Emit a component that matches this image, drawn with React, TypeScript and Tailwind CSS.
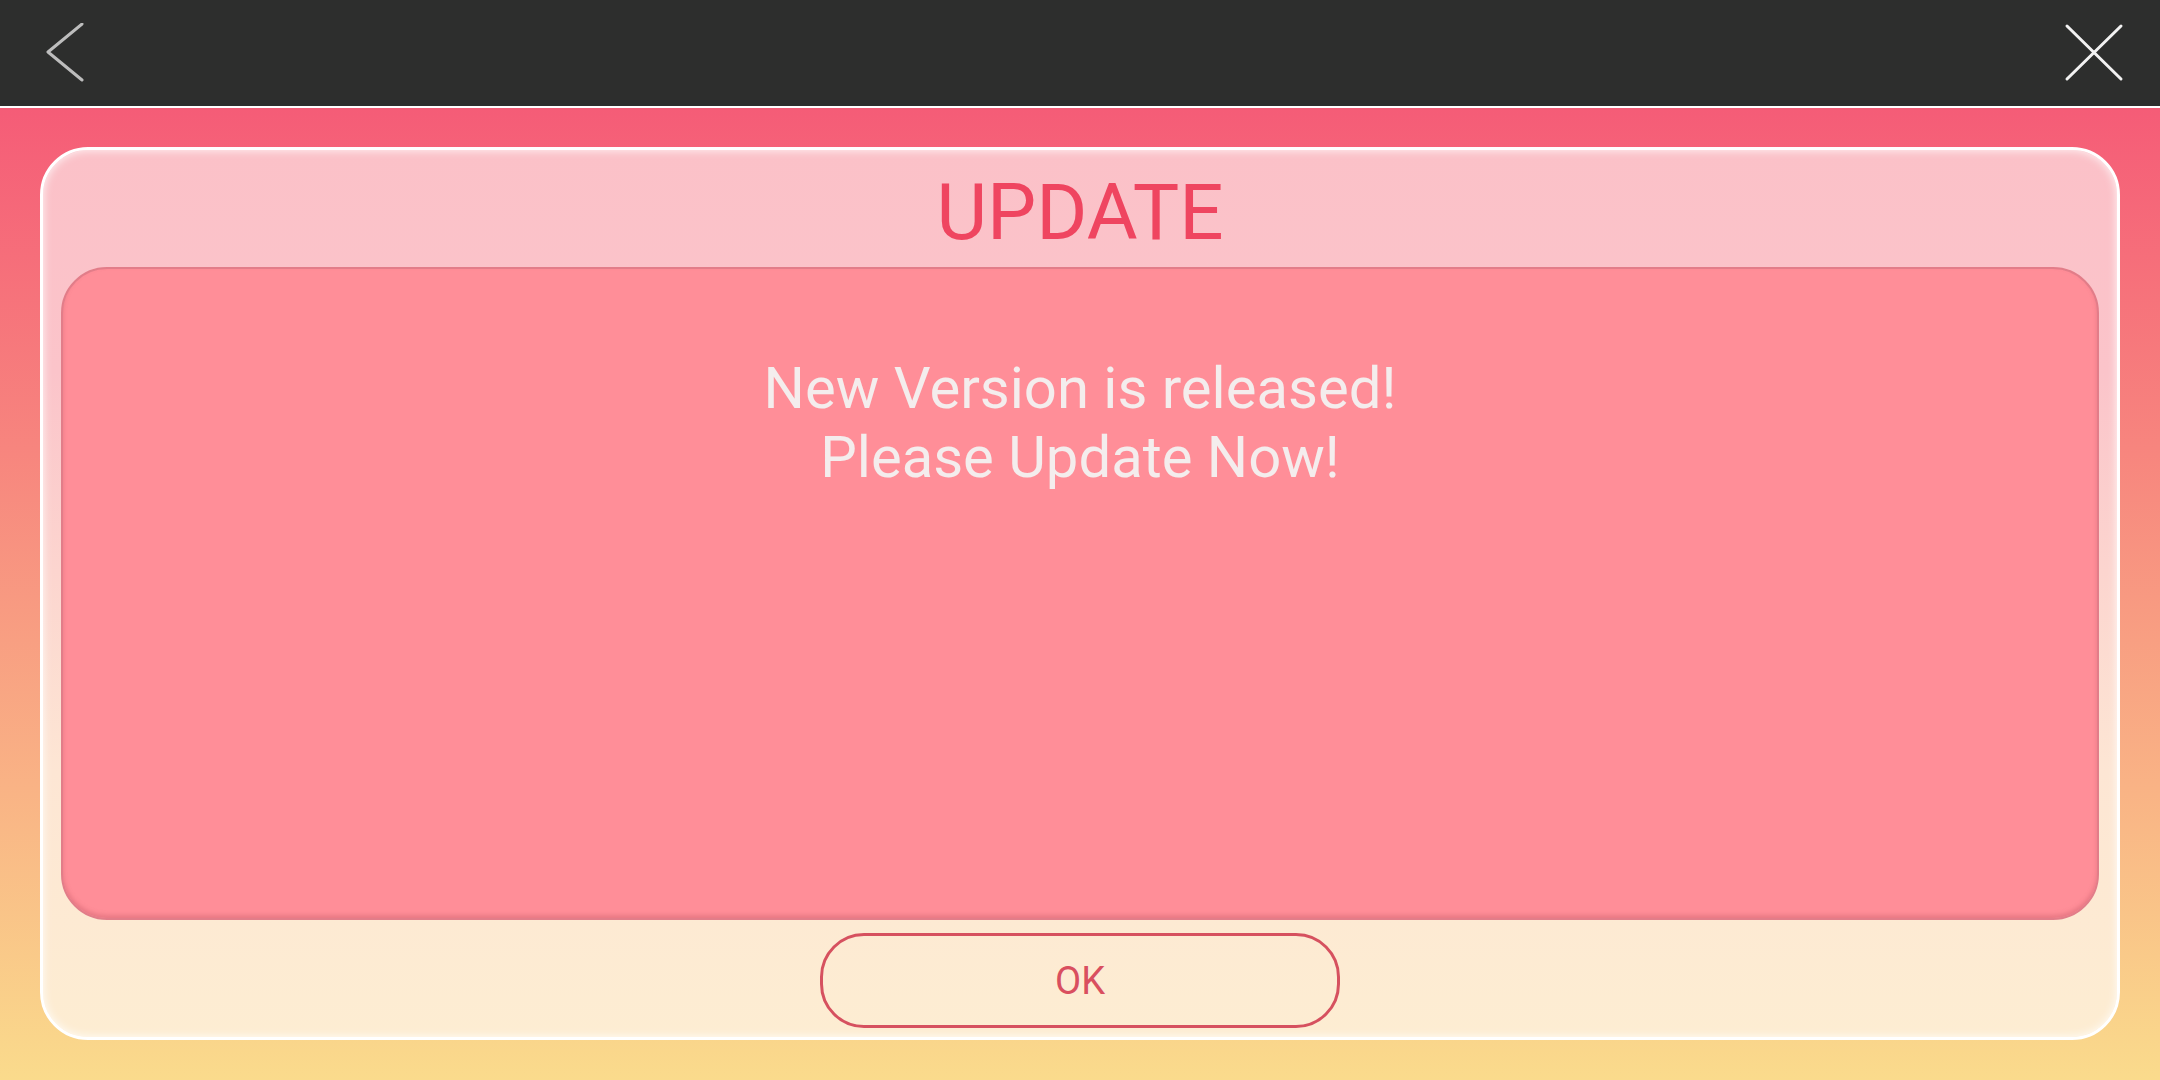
import type { ReactNode } from 'react'

const font = { fontFamily: 'Roboto, "Noto Sans", Arial, sans-serif' }

function TopBar() {
  return (
    <header className="flex h-[108px] items-center justify-between border-b-2 border-white bg-[#2d2e2d] pl-[40px] pr-[36px]">
      <button aria-label="Back" className="h-[60px] w-[60px]">
        <svg viewBox="0 0 60 60" width="60" height="60" fill="none" stroke="#bdbdbd" strokeWidth="3" strokeLinecap="round" strokeLinejoin="round">
          <polyline points="42,1 8,29 42,57" />
        </svg>
      </button>
      <button aria-label="Close" className="h-[60px] w-[60px]">
        <svg viewBox="0 0 60 60" width="60" height="60" fill="none" stroke="#f2f2f2" strokeWidth="3" strokeLinecap="round">
          <line x1="3" y1="3" x2="57" y2="56" />
          <line x1="57" y1="3" x2="3" y2="56" />
        </svg>
      </button>
    </header>
  )
}

function Dialog({ title, children }: { title: string; children: ReactNode }) {
  return (
    <section className="flex h-full flex-col rounded-[48px] border-[3px] border-white bg-[linear-gradient(180deg,#fbc1c8_0%,#fbc4ca_25%,#fde6d4_70%,#fdedd2_100%)] px-[18px] pb-[9px] shadow-[inset_0_0_10px_rgba(255,255,255,0.9)]">
      <h1 className="flex h-[117px] items-center justify-center pt-[8px] text-[78px] leading-none text-[#ef4560]">
        {title}
      </h1>
      <div className="flex-1 rounded-[46px] border-2 border-[#e27d89] bg-[#ff8e98] pt-[85px] text-center shadow-[inset_0_-3px_4px_rgba(190,80,95,0.35)]">
        {children}
      </div>
      <div className="mt-[13px] flex justify-center">
        <button className="h-[95px] w-[520px] rounded-[44px] border-[3px] border-[#d6515f] text-[38px] leading-none text-[#d94f5f]">
          OK
        </button>
      </div>
    </section>
  )
}

export default function App() {
  return (
    <div className="flex h-[1080px] w-[2160px] flex-col overflow-hidden" style={font}>
      <TopBar />
      <main className="flex-1 bg-[linear-gradient(180deg,#f55c77_0%,#f7857e_35%,#f9b385_70%,#fadb8c_100%)] px-[40px] pb-[40px] pt-[39px]">
        <Dialog title="UPDATE">
          <p className="text-[58px] leading-[69px] text-[#f4eded]">
            New Version is released!
            <br />
            Please Update Now!
          </p>
        </Dialog>
      </main>
    </div>
  )
}
